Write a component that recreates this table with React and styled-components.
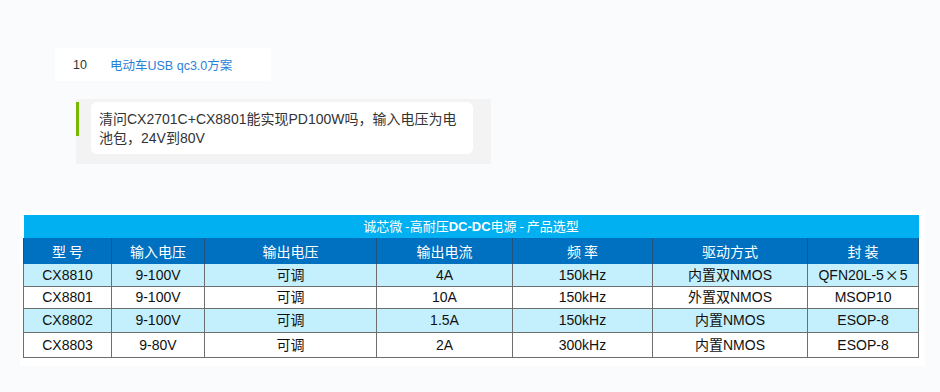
import React from "react";
import styled, { createGlobalStyle } from "styled-components";

const Global = createGlobalStyle`
  html, body { margin: 0; padding: 0; background: #fafbfd; }
  body { font-family: "Noto Sans CJK SC", "Liberation Sans", sans-serif; }
`;

const Page = styled.div`
  width: 940px;
  height: 392px;
  padding-top: 48px;
  box-sizing: border-box;
  display: flex;
  flex-direction: column;
  align-items: flex-start;
`;

const TitleCard = styled.div`
  margin-left: 55px;
  width: 216px;
  height: 33px;
  background: #ffffff;
  display: flex;
  align-items: center;
  box-sizing: border-box;
  padding-left: 18px;
  font-size: 12.5px;
  font-family: "Liberation Sans", "Noto Sans CJK SC", sans-serif;
`;

const Num = styled.span`
  color: #333;
  width: 37px;
`;

const Link = styled.span`
  color: #2b7fd9;
`;

const Question = styled.div`
  margin-top: 18px;
  margin-left: 76px;
  width: 415px;
  height: 65px;
  box-sizing: border-box;
  background: #f3f3f3;
  display: flex;
  align-items: flex-start;
  gap: 12px;
  padding-top: 3px;
`;

const GreenBar = styled.div`
  width: 3px;
  height: 34px;
  background: #76b900;
  flex: none;
`;

const Bubble = styled.div`
  width: 382px;
  height: 52px;
  box-sizing: border-box;
  background: #ffffff;
  border-radius: 6px;
  padding: 8px 8px 0 8px;
  font-size: 14px;
  line-height: 19px;
  color: #333;
  white-space: nowrap;
  font-family: "Liberation Sans", "Noto Sans CJK SC", sans-serif;
`;

const TableWrap = styled.div`
  margin-top: 46px;
  margin-left: 20px;
  width: 905px;
  box-sizing: border-box;
  background: #ffffff;
  padding: 5px 7px 8px 3px;
`;

const Table = styled.table`
  width: 895px;
  border-collapse: collapse;
  table-layout: fixed;
`;

const Caption = styled.th`
  background: #00b0f0;
  color: #ffffff;
  height: 23px;
  padding: 0;
  font-size: 13px;
  line-height: 16px;
  font-weight: 400;
  font-family: "Noto Sans CJK SC", sans-serif;
  text-align: center;
`;

const Latin = styled.b`
  font-family: "Liberation Sans", sans-serif;
  font-weight: 700;
`;

const Head = styled.th`
  background: #0070c0;
  color: #ffffff;
  height: 26px;
  padding: 0;
  font-size: 14px;
  line-height: 16px;
  font-weight: 400;
  font-family: "Noto Sans CJK SC", sans-serif;
  border-left: 1px solid #23517e;
  border-right: 1px solid #23517e;
  text-align: center;
`;

const Row = styled.tr`
  background: ${(p) => (p.$alt ? "#c4effc" : "#ffffff")};
`;

const Cell = styled.td`
  height: ${(p) => p.$h}px;
  padding: 0;
  box-sizing: border-box;
  text-align: center;
  font-size: 14px;
  line-height: 16px;
  color: #111;
  font-family: "Liberation Sans", "Noto Sans CJK SC", sans-serif;
  border: 1px solid #6e6e6e;
  border-top: none;
`;

const Times = styled.span`
  font-family: "Noto Sans CJK SC", sans-serif;
  font-feature-settings: "fwid";
  margin: 0 1px;
`;

const widths = [88, 93, 172, 136, 140, 155, 111];
const heads = ["型 号", "输入电压", "输出电压", "输出电流", "频 率", "驱动方式", "封 装"];
const rows = [
  { h: 22, cells: ["CX8810", "9-100V", "可调", "4A", "150kHz", "内置双NMOS", <>QFN20L-5<Times>×</Times>5</>] },
  { h: 22, cells: ["CX8801", "9-100V", "可调", "10A", "150kHz", "外置双NMOS", "MSOP10"] },
  { h: 24, cells: ["CX8802", "9-100V", "可调", "1.5A", "150kHz", "内置NMOS", "ESOP-8"] },
  { h: 25, cells: ["CX8803", "9-80V", "可调", "2A", "300kHz", "内置NMOS", "ESOP-8"] },
];

export default function App() {
  return (
    <>
      <Global />
      <Page>
        <TitleCard>
          <Num>10</Num>
          <Link>电动车USB qc3.0方案</Link>
        </TitleCard>
        <Question>
          <GreenBar />
          <Bubble>
            清问CX2701C+CX8801能实现PD100W吗，输入电压为电
            <br />
            池包，24V到80V
          </Bubble>
        </Question>
        <TableWrap>
          <Table>
            <colgroup>
              {widths.map((w, i) => (
                <col key={i} style={{ width: w }} />
              ))}
            </colgroup>
            <thead>
              <tr>
                <Caption colSpan={7}>
                  诚芯微 -高耐压<Latin>DC-DC</Latin>电源 - 产品选型
                </Caption>
              </tr>
              <tr>
                {heads.map((h) => (
                  <Head key={h}>{h}</Head>
                ))}
              </tr>
            </thead>
            <tbody>
              {rows.map((r, i) => (
                <Row key={i} $alt={i % 2 === 0}>
                  {r.cells.map((c, j) => (
                    <Cell key={j} $h={r.h}>
                      {c}
                    </Cell>
                  ))}
                </Row>
              ))}
            </tbody>
          </Table>
        </TableWrap>
      </Page>
    </>
  );
}
